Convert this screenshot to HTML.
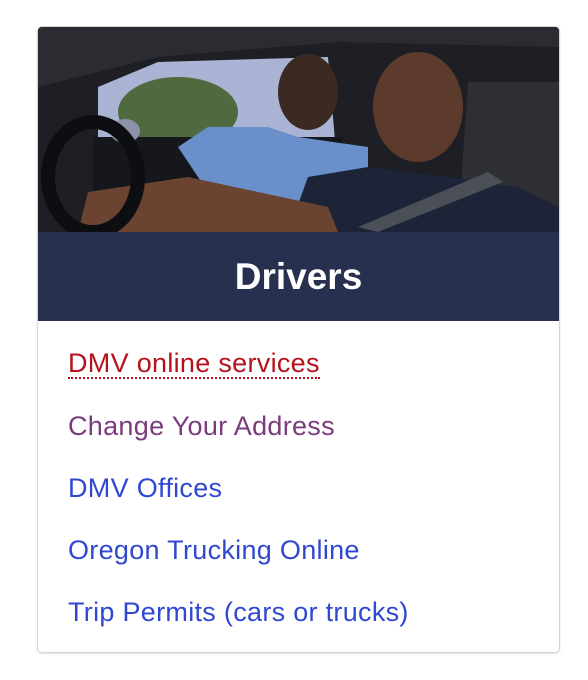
<!DOCTYPE html>
<html><head><style>
html,body{margin:0;padding:0;background:#fff;width:588px;height:680px;overflow:hidden}
.card{position:absolute;left:37px;top:26px;width:521px;height:625px;border:1px solid #d6d6d6;border-radius:5px;overflow:hidden;box-shadow:0 1px 2px rgba(0,0,0,.12)}
.img{position:absolute;left:0;top:0;width:521px;height:205px}
.band{position:absolute;left:0;top:205px;width:521px;height:89px;background:#27314f}
.band h2{margin:0;font:bold 37px/89px "Liberation Sans",sans-serif;color:#fff;text-align:center}
.links{position:absolute;left:30px;top:294px}
.links a{position:absolute;left:0;white-space:nowrap;font:27px "Liberation Sans",sans-serif;letter-spacing:0.3px;text-decoration:none}
</style></head><body>
<div class="card">
<svg class="img" viewBox="0 0 521 205" width="521" height="205">
<rect width="521" height="205" fill="#1d1f24"/>
<polygon points="60,60 120,35 290,30 300,150 60,150" fill="#aab3d4"/>
<ellipse cx="140" cy="85" rx="60" ry="35" fill="#4f6a3e"/>
<rect x="55" y="110" width="250" height="60" fill="#15171c"/>
<ellipse cx="87" cy="104" rx="15" ry="12" fill="#8c93a8"/>
<polygon points="0,0 521,0 521,20 300,15 120,30 0,60" fill="#2a2c31"/>
<polygon points="140,120 170,100 230,100 260,110 330,120 330,180 180,180" fill="#6b8fcb"/>
<ellipse cx="270" cy="65" rx="30" ry="38" fill="#3b2a22"/>
<polygon points="430,55 521,55 521,205 420,205" fill="#2d2f35"/>
<polygon points="270,150 330,140 410,150 480,160 521,180 521,205 250,205" fill="#1d2438"/>
<polygon points="320,200 450,145 465,155 340,205" fill="#4a4f58"/>
<ellipse cx="380" cy="80" rx="45" ry="55" fill="#5c3a2c"/>
<polygon points="50,165 150,150 290,180 300,205 40,205" fill="#6a4331"/>
<ellipse cx="55" cy="150" rx="45" ry="55" fill="none" stroke="#0d0e11" stroke-width="14"/>
</svg>
<div class="band"><h2>Drivers</h2></div>
<div class="links">
<a style="top:29px;color:#b5121b;border-bottom:2px dotted #b5121b;line-height:27px">DMV online services</a>
<a style="top:90px;color:#7a3c7c">Change Your Address</a>
<a style="top:152px;color:#3048d0">DMV Offices</a>
<a style="top:214px;color:#3048d0">Oregon Trucking Online</a>
<a style="top:276px;color:#3048d0">Trip Permits (cars or trucks)</a>
</div>
</div>
</body></html>
